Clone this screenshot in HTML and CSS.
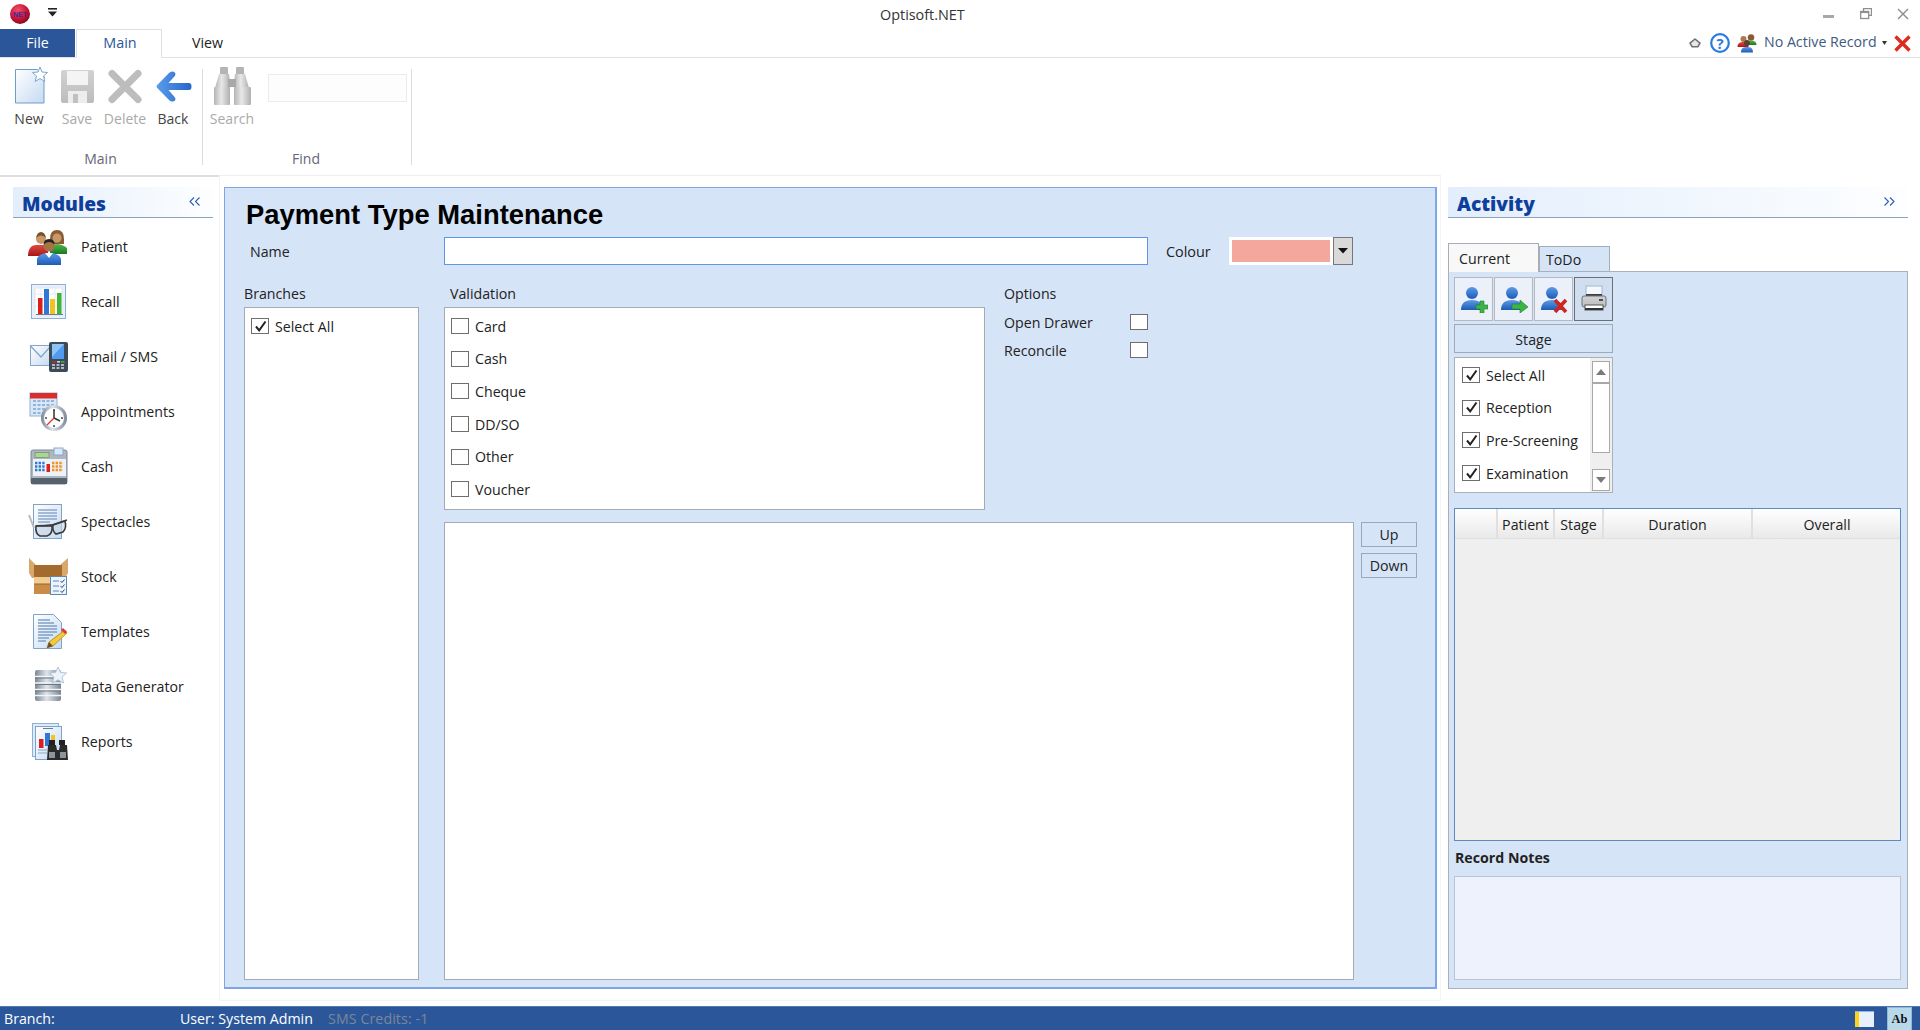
FILE: index.html
```html
<!DOCTYPE html>
<html lang="en">
<head>
<meta charset="utf-8">
<title>Optisoft.NET</title>
<link rel="stylesheet" href="styles.css">
</head>
<body>
<svg class="defs" aria-hidden="true">
  <defs>
    <linearGradient id="gDoc" x1="0" y1="0" x2="1" y2="1"><stop offset="0" stop-color="#ffffff"/><stop offset="1" stop-color="#c4daf2"/></linearGradient>
    <linearGradient id="gBlue" x1="0" y1="0" x2="0" y2="1"><stop offset="0" stop-color="#5c9be8"/><stop offset="1" stop-color="#1c5bb5"/></linearGradient>
    <linearGradient id="gRed" x1="0" y1="0" x2="0" y2="1"><stop offset="0" stop-color="#e0493f"/><stop offset="1" stop-color="#a81818"/></linearGradient>
    <linearGradient id="gGreen" x1="0" y1="0" x2="0" y2="1"><stop offset="0" stop-color="#55b84a"/><stop offset="1" stop-color="#187a22"/></linearGradient>
    <linearGradient id="gSteel" x1="0" y1="0" x2="1" y2="0"><stop offset="0" stop-color="#7b8794"/><stop offset=".45" stop-color="#dfe4ea"/><stop offset="1" stop-color="#7b8794"/></linearGradient>
    <linearGradient id="gSilver" x1="0" y1="0" x2="1" y2="0"><stop offset="0" stop-color="#b4b4b4"/><stop offset=".45" stop-color="#e8e8e8"/><stop offset="1" stop-color="#b0b0b0"/></linearGradient>
    <linearGradient id="gGray" x1="0" y1="0" x2="0" y2="1"><stop offset="0" stop-color="#d2d2d2"/><stop offset="1" stop-color="#bcbcbc"/></linearGradient>
    <linearGradient id="gBack" x1="0" y1="0" x2="1" y2="0"><stop offset="0" stop-color="#5b9bec"/><stop offset="1" stop-color="#2467c8"/></linearGradient>
    <radialGradient id="gBall" cx=".4" cy=".3" r=".8"><stop offset="0" stop-color="#f0506a"/><stop offset=".6" stop-color="#c81030"/><stop offset="1" stop-color="#5a0c28"/></radialGradient>
  </defs>
</svg>

<div class="app">
  <header class="titlebar">
    <div class="qat">
      <svg class="logo" width="20" height="20" viewBox="0 0 20 20"><circle cx="10" cy="10" r="10" fill="url(#gBall)"/><text x="10" y="13" class="logo-text" text-anchor="middle">NET</text></svg>
      <svg class="qat-drop" width="9" height="9" viewBox="0 0 9 9"><rect x="0" y="0" width="9" height="1.6" fill="#222"/><path d="M0 3.4h9L4.5 8.4z" fill="#222"/></svg>
    </div>
    <div class="app-title">Optisoft.NET</div>
    <div class="win">
      <svg width="12" height="12" viewBox="0 0 12 12"><rect x="0" y="7" width="11" height="3" fill="#a8a8a8"/></svg>
      <svg width="12" height="12" viewBox="0 0 12 12" fill="none" stroke="#8f8f8f" stroke-width="1.3"><path d="M3.5 3V.7h8v6.6H9"/><rect x=".7" y="3.5" width="8" height="7" fill="#fff"/><path d="M.7 4.4h8"/></svg>
      <svg width="12" height="12" viewBox="0 0 12 12" fill="none" stroke="#8a8a8a" stroke-width="1.4"><path d="M1 1l10 10M11 1L1 11"/></svg>
    </div>
  </header>

  <nav class="tabsbar">
    <div class="tab-file">File</div>
    <div class="tab-main">Main</div>
    <div class="tab-view">View</div>
    <div class="tools">
      <svg class="tool-chev" width="12" height="10" viewBox="0 0 12 10" fill="#e8e8e8" stroke="#707070" stroke-width="1.6" stroke-linejoin="round"><path d="M1 5.200L6 1l5 4.200-2.200 3.600H3.200z"/></svg>
      <svg class="tool-help" width="20" height="20" viewBox="0 0 20 20"><circle cx="10" cy="10" r="8.8" fill="#fff" stroke="#2a7be0" stroke-width="2.200"/><text x="10" y="15.500" class="help-text" text-anchor="middle">?</text></svg>
      <svg class="tool-people" width="20" height="20" viewBox="0 0 40 40">
        <circle cx="13" cy="12" r="6" fill="#a87a50"/><path d="M1 28c0-8 5-10 12-10s10 3 10 10z" fill="url(#gRed)"/>
        <circle cx="28" cy="9" r="6.5" fill="#8b5a30"/><path d="M20 24c0-7 3-9 8-9s11 2 11 9z" fill="url(#gGreen)"/>
        <circle cx="20" cy="20" r="6" fill="#5c4030"/><path d="M8 39c0-9 5-11 12-11s12 2 12 11z" fill="url(#gBlue)"/>
      </svg>
      <span class="tool-record">No Active Record</span>
      <svg class="tool-caret" width="5" height="4" viewBox="0 0 5 4"><path d="M0 0h5L2.500 4z" fill="#333"/></svg>
      <svg class="tool-close" width="17" height="17" viewBox="0 0 17 17" fill="none" stroke="#de2b20" stroke-width="3.400"><path d="M1.500 1.500l14 14M15.500 1.500l-14 14"/></svg>
    </div>
  </nav>

  <section class="ribbon">
    <div class="rgroup rgroup-main">
      <div class="rbtns">
        <div class="rbtn">
          <svg width="40" height="40" viewBox="0 0 40 40"><path d="M6.500 3.500h22l6.500 7v26.500h-28.500z" fill="url(#gDoc)" stroke="#6e9cc8"/><path d="M31 1l2 5 5.500.5-4 3.500 1.300 5.500L31 12.500 26.200 15.500l1.300-5.500-4-3.500 5.500-.5z" fill="#fff" stroke="#7ea5cf" stroke-width="1"/></svg>
          <span>New</span>
        </div>
        <div class="rbtn off">
          <svg width="40" height="40" viewBox="0 0 40 40"><path d="M4 6q0-2 2-2h29q2 0 2 2v29q0 2-2 2H6q-2 0-2-2z" fill="url(#gGray)"/><rect x="10" y="5" width="21" height="14" fill="#f4f4f4"/><rect x="11" y="25" width="19" height="12" fill="#ededed"/><rect x="16" y="28" width="5" height="9" fill="#c0c0c0"/></svg>
          <span>Save</span>
        </div>
        <div class="rbtn off">
          <svg width="40" height="40" viewBox="0 0 40 40" fill="none" stroke="#bdbdbd" stroke-width="7" stroke-linecap="round"><path d="M7 7.500l26 26M33 7.500l-26 26"/></svg>
          <span>Delete</span>
        </div>
        <div class="rbtn">
          <svg width="40" height="40" viewBox="0 0 40 40"><path d="M19 5.500q2 0 3 1.200t0 3L15.500 17H36q2.500 0 2.500 3.500T36 24H15.500l6.500 7.500q1 1.800 0 3T19 35.500q-1.500 0-3-1.500L4 21.800q-1-1.300 0-2.600L16 7q1.500-1.500 3-1.500z" fill="url(#gBack)"/></svg>
          <span>Back</span>
        </div>
      </div>
      <div class="rlabel">Main</div>
    </div>
    <div class="rgroup rgroup-find">
      <div class="rbtns">
        <div class="rbtn off">
          <svg width="40" height="40" viewBox="0 0 40 40"><rect x="8" y="1" width="8" height="8" rx="1" fill="#b4b4b4"/><rect x="24" y="1" width="8" height="8" rx="1" fill="#b4b4b4"/><path d="M7 8h10l1 8v6H3z" fill="url(#gSilver)"/><path d="M23 8h10l4 14H22v-6z" fill="url(#gSilver)"/><rect x="16" y="13" width="8" height="8" fill="#a8a8a8"/><rect x="2" y="21" width="16" height="18" rx="1" fill="url(#gSilver)"/><rect x="22" y="21" width="17" height="18" rx="1" fill="url(#gSilver)"/></svg>
          <span>Search</span>
        </div>
        <div class="find-input"></div>
      </div>
      <div class="rlabel">Find</div>
    </div>
  </section>

  <main class="body">
    <aside class="sidebar">
      <div class="panelhead"><span class="panelhead-title">Modules</span><svg class="panelhead-chev" width="11" height="9" viewBox="0 0 11 9" fill="none" stroke="#2a5db0" stroke-width="1.100"><path d="M5 .5l-4 4 4 4M10.500.5l-4 4 4 4"/></svg></div>
      <ul class="modules">
        <li class="mod">
          <svg width="40" height="40" viewBox="0 0 40 40">
            <circle cx="13" cy="12" r="5" fill="#c8976a"/><path d="M8 11q1-6 5-6t5 6q-2-2.500-5-2.500T8 11z" fill="#7a5228"/><path d="M0 29c0-8 4-11 8-11h12v11z" fill="url(#gRed)"/>
            <path d="M22 12q0-9 7-9t7 9v5h-14z" fill="#8a5c34"/><circle cx="29" cy="11" r="4.500" fill="#c8976a"/><path d="M22 27v-7q2-3 7-3t10 4v6z" fill="url(#gGreen)"/>
            <circle cx="21" cy="19" r="5.500" fill="#a87248"/><path d="M15.500 18q0-6 5.500-6t5.500 6q-2-3-5.500-3t-5.500 3z" fill="#222"/><path d="M9 38v-6q2-6 12-6t12 6v6z" fill="url(#gBlue)"/><path d="M17 26l4 5 4-5z" fill="#fff"/>
          </svg>
          <span>Patient</span>
        </li>
        <li class="mod">
          <svg width="40" height="40" viewBox="0 0 40 40"><rect x="3.500" y="2.500" width="34" height="34" fill="#e9f0fa" stroke="#8fb0d6"/><rect x="7" y="6" width="27" height="27" fill="#fff" stroke="#dde6f0"/><path d="M7 12h27M7 18h27M7 24h27M13 6v27M20 6v27M27 6v27" stroke="#e6ebf2" stroke-width="1"/><rect x="10" y="16" width="4.500" height="16" fill="#d8211e"/><rect x="16" y="7" width="5" height="25" fill="#2f78d6"/><rect x="22" y="17" width="5" height="15" fill="#f2c21f"/><rect x="29" y="11" width="4.500" height="21" fill="#3fb43a"/><path d="M8 32.500h27" stroke="#6b7c90"/></svg>
          <span>Recall</span>
        </li>
        <li class="mod">
          <svg width="40" height="40" viewBox="0 0 40 40"><rect x="2.500" y="8.500" width="20" height="20" fill="url(#gDoc)" stroke="#84a6cc"/><path d="M2.500 9L13 20 23 9" fill="none" stroke="#84a6cc" stroke-width="1.300"/><rect x="21" y="5" width="19" height="30" rx="2" fill="#3d4a58"/><rect x="24" y="7" width="12" height="15" fill="#4f9bf0"/><path d="M24 7h12L24 20z" fill="#8cc4f7"/><rect x="24" y="24" width="4" height="1.600" fill="#d02020"/><rect x="29" y="24" width="3" height="1.600" fill="#cfd6de"/><rect x="33" y="24" width="3.500" height="1.600" fill="#40b040"/><path d="M24 28h3m1.500 0h3m1.500 0h3M24 31h3m1.500 0h3m1.500 0h3" stroke="#d5dbe2" stroke-width="1.500"/></svg>
          <span>Email / SMS</span>
        </li>
        <li class="mod">
          <svg width="40" height="40" viewBox="0 0 40 40"><rect x="2" y="1" width="27" height="23" fill="#dbe7f6" stroke="#93b1d4"/><rect x="2" y="1" width="27" height="5.500" fill="#d82f2a"/><path d="M5 9h21M5 13h21M5 17h14M5 21h12" stroke="#8fb4e0" stroke-width="2" stroke-dasharray="3 1.500"/><circle cx="26" cy="26" r="13" fill="url(#gSteel)"/><circle cx="26" cy="26" r="10" fill="#fff"/><path d="M26 26V18M26 26l6 3" stroke="#333" stroke-width="1.500" fill="none"/><path d="M26 26l-7 7" stroke="#e03020" stroke-width="1.300"/><path d="M26 17v2M26 33v2M17 26h2M33 26h2" stroke="#444" stroke-width="1.500"/></svg>
          <span>Appointments</span>
        </li>
        <li class="mod">
          <svg width="40" height="40" viewBox="0 0 40 40"><rect x="3" y="3" width="36" height="34" rx="2" fill="#aeb6c0" stroke="#7e8a98"/><rect x="26" y="1" width="9" height="7" fill="#d8e8f8" stroke="#8ba8c8"/><rect x="7" y="5.500" width="14" height="5" fill="#a8d890" stroke="#6e7c6a" stroke-width=".6"/><rect x="5" y="12" width="33" height="17" fill="#eef1f5"/><path d="M7 16h10M7 19.500h10M7 23h10" stroke="#2f78d6" stroke-width="2.400" stroke-dasharray="2.400 1.200"/><path d="M24 16h11M24 19.500h11M24 23h11" stroke="#ef9226" stroke-width="2.400" stroke-dasharray="2.400 1.200"/><rect x="18.500" y="17" width="3.500" height="8" fill="#d82020"/><rect x="3" y="31" width="36" height="6" fill="#56616e"/></svg>
          <span>Cash</span>
        </li>
        <li class="mod">
          <svg width="40" height="40" viewBox="0 0 40 40"><rect x="5.500" y="2.500" width="28" height="34" fill="url(#gDoc)" stroke="#7fa3c9"/><path d="M10 8h19M10 11h19M10 14h19M10 17h19M10 20h12" stroke="#8aa8cc" stroke-width="1.500"/><path d="M1 13l5 13" stroke="#bbb" stroke-width="2"/><path d="M8 24q9 0 16-1l15-5" stroke="#444" stroke-width="1.800" fill="none"/><path d="M8 24h16q1 8-5 10h-7q-5-2-4-10z" fill="#c4d4e6" fill-opacity=".6" stroke="#3a3a3a" stroke-width="1.600"/><path d="M25 23l12-4q2 7-2 11l-7 2q-4-3-3-9z" fill="#c4d4e6" fill-opacity=".6" stroke="#3a3a3a" stroke-width="1.600"/></svg>
          <span>Spectacles</span>
        </li>
        <li class="mod">
          <svg width="40" height="40" viewBox="0 0 40 40"><path d="M1 1l7 7h24l8-7v15l-3 5H4l-3-5z" fill="#d9a76a"/><rect x="6" y="8" width="28" height="12" fill="#a46a2e"/><rect x="6" y="20" width="28" height="7" fill="#f0cd95"/><rect x="6" y="27" width="28" height="10" fill="#c98b45"/><path d="M6 27h28" stroke="#9c6228"/><rect x="22.500" y="19.500" width="16" height="18" fill="#edf3fb" stroke="#5c88b6"/><path d="M25 24h6M25 29h6M25 34h6" stroke="#5c88b6"/><path d="M32.500 24l1.500 1.500 2.500-3M32.500 29l1.500 1.500 2.500-3M32.500 34l1.500 1.500 2.500-3" stroke="#2c4a70" fill="none"/></svg>
          <span>Stock</span>
        </li>
        <li class="mod">
          <svg width="40" height="40" viewBox="0 0 40 40"><path d="M5.500 2.500h20l8 8v26h-28z" fill="url(#gDoc)" stroke="#7fa3c9"/><path d="M10 8h12M10 11h16M10 14h19M10 17h19M10 20h19M10 23h15M10 26h11M10 29h8" stroke="#7f9fc6" stroke-width="1.500"/><path d="M37 18l2 3-14 13-6 2 2-6z" fill="#f5c93a" stroke="#b08020" stroke-width=".8"/><path d="M35 16l4 4-2 2-4-4z" fill="#de3a3a"/><path d="M19 36l2-6 4 4z" fill="#6a5030"/></svg>
          <span>Templates</span>
        </li>
        <li class="mod">
          <svg width="40" height="40" viewBox="0 0 40 40"><rect x="7" y="3" width="26" height="31" rx="2" fill="url(#gSteel)"/><path d="M7 9.500h26M7 16h26M7 22.500h26M7 28.500h26" stroke="#f2f4f7" stroke-width="1.300"/><path d="M7 11h26M7 17.500h26M7 24h26" stroke="#6b7683"/><path d="M30 0l2.500 5.500 6 .5-4.500 4 1.500 6-5.500-3.200-5.500 3.200 1.500-6-4.500-4 6-.5z" fill="#eef3fa" stroke="#aec4dc"/></svg>
          <span>Data Generator</span>
        </li>
        <li class="mod">
          <svg width="40" height="40" viewBox="0 0 40 40"><rect x="4.500" y="1.500" width="26" height="33" fill="#dfeafa" stroke="#8fb0d6"/><rect x="7.500" y="4.500" width="26" height="33" fill="url(#gDoc)" stroke="#7fa3c9"/><path d="M15 6.500h10" stroke="#6080a8"/><rect x="11" y="17" width="4.500" height="9" fill="#d8211e"/><rect x="17" y="11" width="5" height="13" fill="#2f78d6"/><rect x="23" y="13" width="4" height="9" fill="#f2c21f"/><path d="M10 28h9M10 31h9" stroke="#8aa8cc"/><rect x="21" y="18" width="6" height="5" fill="#222"/><rect x="31" y="18" width="6" height="5" fill="#222"/><path d="M20 23h8l1 5h2l1-5h7l1 15H19z" fill="#2b2b2b"/><path d="M21 30h6v6h-6zM32 30h6v6h-6z" fill="#8c949c"/></svg>
          <span>Reports</span>
        </li>
      </ul>
    </aside>

    <div class="center">
      <section class="maint">
        <h1 class="maint-title">Payment Type Maintenance</h1>
        <div class="name-row">
          <label class="name-label">Name</label>
          <div class="name-input"></div>
          <label class="colour-label">Colour</label>
          <div class="swatch"></div>
          <div class="swatch-btn"><svg width="12" height="8" viewBox="0 0 12 8"><path d="M1 1h10L6 6.500z" fill="#111"/></svg></div>
        </div>
        <div class="lower">
          <div class="col-branches">
            <div class="caption">Branches</div>
            <div class="box box-branches">
              <div class="chk"><span class="cb"><svg width="15" height="15" viewBox="0 0 15 15"><path d="M3 7.500l3.200 3.800L12.500 2.500" fill="none" stroke="#222" stroke-width="2"/></svg></span>Select All</div>
            </div>
          </div>
          <div class="col-rest">
            <div class="top">
              <div class="col-valid">
                <div class="caption caption-ind">Validation</div>
                <div class="box box-valid">
                  <div class="chk"><span class="cb"></span>Card</div>
                  <div class="chk"><span class="cb"></span>Cash</div>
                  <div class="chk"><span class="cb"></span>Cheque</div>
                  <div class="chk"><span class="cb"></span>DD/SO</div>
                  <div class="chk"><span class="cb"></span>Other</div>
                  <div class="chk"><span class="cb"></span>Voucher</div>
                </div>
              </div>
              <div class="col-opts">
                <div class="caption">Options</div>
                <div class="opt"><span>Open Drawer</span><span class="cb"></span></div>
                <div class="opt"><span>Reconcile</span><span class="cb"></span></div>
              </div>
            </div>
            <div class="bottom">
              <div class="box box-large"></div>
              <div class="updown">
                <div class="ud">Up</div>
                <div class="ud">Down</div>
              </div>
            </div>
          </div>
        </div>
      </section>
    </div>

    <aside class="activity">
      <div class="panelhead"><span class="panelhead-title">Activity</span><svg class="panelhead-chev" width="11" height="9" viewBox="0 0 11 9" fill="none" stroke="#2a5db0" stroke-width="1.100"><path d="M.5.500l4 4-4 4M6 .5l4 4-4 4"/></svg></div>
      <div class="act-tabs">
        <div class="act-tab act-on">Current</div>
        <div class="act-tab act-off">ToDo</div>
      </div>
      <div class="act-panel">
        <div class="act-icons">
          <div class="ibtn"><svg width="28" height="28" viewBox="0 0 28 28"><circle cx="12" cy="8" r="6" fill="url(#gBlue)"/><path d="M1 25q0-10 11-10t11 10z" fill="url(#gBlue)"/><path d="M16 20h4v-4h4v4h4v4h-4v4h-4v-4h-4z" fill="#3cb44a" stroke="#1f7f2a" stroke-width=".6"/></svg></div>
          <div class="ibtn"><svg width="28" height="28" viewBox="0 0 28 28"><circle cx="12" cy="8" r="6" fill="url(#gBlue)"/><path d="M1 25q0-10 11-10t11 10z" fill="url(#gBlue)"/><path d="M12 19h8v-4l8 7-8 6v-4h-8z" fill="#3cb44a" stroke="#1f7f2a" stroke-width=".6"/></svg></div>
          <div class="ibtn"><svg width="28" height="28" viewBox="0 0 28 28"><circle cx="12" cy="8" r="6" fill="url(#gBlue)"/><path d="M1 25q0-10 11-10t11 10z" fill="url(#gBlue)"/><path d="M15 15l11 12M26 15L15 27" stroke="#cf2420" stroke-width="3.600" fill="none"/></svg></div>
          <div class="ibtn ibtn-on"><svg width="28" height="28" viewBox="0 0 28 28"><rect x="6" y="1" width="16" height="10" fill="#f4f8fd" stroke="#9fb6d0"/><rect x="6" y="9" width="16" height="2" fill="#3a3f46"/><rect x="2" y="11" width="24" height="11" rx="2" fill="url(#gGray)" stroke="#6d747c"/><rect x="19" y="14" width="4" height="2" fill="#4a5058"/><rect x="5" y="20" width="18" height="5" fill="#fff" stroke="#555"/><rect x="5" y="23" width="18" height="2" fill="#2f343a"/></svg></div>
        </div>
        <div class="stage-btn">Stage</div>
        <div class="stage-list">
          <div class="stage-items">
            <div class="chk"><span class="cb"><svg width="15" height="15" viewBox="0 0 15 15"><path d="M3 7.500l3.200 3.800L12.500 2.500" fill="none" stroke="#222" stroke-width="2"/></svg></span>Select All</div>
            <div class="chk"><span class="cb"><svg width="15" height="15" viewBox="0 0 15 15"><path d="M3 7.500l3.200 3.800L12.500 2.500" fill="none" stroke="#222" stroke-width="2"/></svg></span>Reception</div>
            <div class="chk"><span class="cb"><svg width="15" height="15" viewBox="0 0 15 15"><path d="M3 7.500l3.200 3.800L12.500 2.500" fill="none" stroke="#222" stroke-width="2"/></svg></span>Pre-Screening</div>
            <div class="chk"><span class="cb"><svg width="15" height="15" viewBox="0 0 15 15"><path d="M3 7.500l3.200 3.800L12.500 2.500" fill="none" stroke="#222" stroke-width="2"/></svg></span>Examination</div>
          </div>
          <div class="scroll">
            <div class="sbtn"><svg width="10" height="6" viewBox="0 0 10 6"><path d="M0 6l5-6 5 6z" fill="#7a7a7a"/></svg></div>
            <div class="sthumb"></div>
            <div class="sbtn"><svg width="10" height="6" viewBox="0 0 10 6"><path d="M0 0l5 6 5-6z" fill="#7a7a7a"/></svg></div>
          </div>
        </div>
        <div class="grid">
          <div class="grid-head">
            <div class="gh gh-0"></div>
            <div class="gh gh-1">Patient</div>
            <div class="gh gh-2">Stage</div>
            <div class="gh gh-3">Duration</div>
            <div class="gh gh-4">Overall</div>
          </div>
        </div>
        <div class="notes-title">Record Notes</div>
        <div class="notes"></div>
      </div>
    </aside>
  </main>

  <footer class="status">
    <span class="st-branch">Branch:</span>
    <span class="st-user">User: System Admin</span>
    <span class="st-sms">SMS Credits: -1</span>
    <div class="st-right">
      <div class="st-view"></div>
      <div class="st-ab">Ab</div>
    </div>
  </footer>
</div>
</body>
</html>
```

FILE: styles.css
```css
* { box-sizing: border-box; }
html, body { margin: 0; padding: 0; background: #fff; }
body { font-family: "Open Sans", "Noto Sans", sans-serif; font-size: 14.2px; color: #222; letter-spacing: 0; }
svg { display: block; flex: none; }
.defs { position: absolute; width: 0; height: 0; }
.app { width: 1920px; height: 1030px; display: flex; flex-direction: column; overflow: hidden; }

.titlebar { height: 29px; display: flex; align-items: flex-start; flex: none; }
.qat { width: 880px; display: flex; padding: 4px 0 0 10px; }
.qat-drop { margin: 4px 0 0 18px; }
.logo-text { font: bold 7px "Liberation Sans", sans-serif; fill: #3b2a9a; }
.app-title { padding-top: 5px; font-size: 14.4px; line-height: 20px; color: #333; }
.win { margin-left: auto; display: flex; gap: 25px; padding: 8px 11px 0 0; }

.tabsbar { height: 29px; display: flex; align-items: stretch; border-bottom: 1px solid #e1e1e1; flex: none; }
.tab-file { width: 75px; height: 28px; background: #2b579a; color: #fff; text-align: center; line-height: 28px; font-size: 14.2px; }
.tab-main { width: 86px; height: 29px; margin-left: 1px; padding-left: 2px; border: 1px solid #dedede; border-bottom-color: #fff; color: #2b579a; text-align: center; line-height: 26px; font-size: 14.4px; }
.tab-view { width: 90px; padding-left: 1px; text-align: center; line-height: 27px; font-size: 14.2px; color: #222; }
.tools { margin-left: auto; display: flex; align-items: center; padding-right: 9px; height: 28px; }
.tool-chev { margin-right: 9px; }
.tool-help { margin-right: 7px; }
.tool-people { margin-right: 7px; }
.tool-record { font-size: 14.2px; line-height: 26px; height: 28px; color: #3d5a80; width: 118px; white-space: nowrap; }
.tool-caret { margin-right: 7px; }
.help-text { font: bold 15px "Open Sans", sans-serif; fill: #2a7be0; }

.ribbon { height: 117px; display: flex; flex: none; }
.rgroup { position: relative; height: 107px; padding: 8px 4px 0 5px; display: flex; flex-direction: column; }
.rgroup::after { content: ""; position: absolute; right: 0; top: 11px; bottom: 0; width: 1px; background: #dcdcdc; }
.rgroup-main { width: 203px; }
.rgroup-find { width: 209px; }
.rbtns { display: flex; height: 65px; }
.rbtn { width: 48px; display: flex; flex-direction: column; align-items: center; color: #444; font-size: 14px; }
.rbtn span { line-height: 20px; margin-top: 3px; white-space: nowrap; }
.rbtn.off { color: #a9a9a9; }
.find-input { width: 139px; height: 28px; margin: 8px 0 0 12px; border: 1px solid #e9ebef; background: #fdfdfd; }
.rlabel { text-align: center; color: #667; font-size: 14px; line-height: 20px; margin-top: 20px; padding-right: 3px; }
.rgroup-find .rlabel { padding-right: 4px; }

.body { flex: 1; display: flex; min-height: 0; }
.sidebar { width: 219px; border-top: 2px solid #dedede; padding: 10px 6px 0 13px; flex: none; }
.panelhead { height: 31px; display: flex; justify-content: space-between; align-items: flex-start; background: linear-gradient(90deg, #e3eefc, #fdfeff); border-bottom: 1px solid #8aa3c0; padding: 0 13px 0 9px; flex: none; }
.panelhead-title { font-size: 19.2px; font-weight: 800; color: #0f3f9c; line-height: 34px; }
.panelhead-chev { margin-top: 10px; }
.modules { list-style: none; margin: 0; padding: 1px 0 0 15px; }
.mod { height: 55px; display: flex; align-items: center; gap: 13px; }

.center { width: 1222px; flex: none; margin-bottom: 5px; padding: 11px 4px; border: 1px solid #f4f4f4; border-top-color: #eeeeee; }
.maint { width: 1213px; height: 802px; background: #d6e4f7; border: 1px solid #7ea6e6; border-width: 1px 2px 2px 1px; padding: 4px 17px 7px 19px; display: flex; flex-direction: column; }
.maint-title { margin: 0; font: bold 27.4px/46px "Liberation Sans", Arial, sans-serif; color: #000; height: 45px; padding-left: 2px; }
.name-row { display: flex; height: 28px; flex: none; }
.name-label { width: 200px; padding: 5px 0 0 6px; line-height: 20px; }
.name-input { width: 704px; height: 28px; background: #fff; border: 1px solid #5e97e6; }
.colour-label { width: 63px; margin-left: 18px; padding-top: 5px; font-size: 14.4px; line-height: 20px; }
.swatch { width: 104px; height: 28px; background: #f4a79c; border: 3px solid #fff; }
.swatch-btn { width: 20px; height: 28px; background: #d9d9d9; border: 1px solid #777; display: flex; align-items: center; justify-content: center; }

.lower { flex: 1; display: flex; min-height: 0; }
.col-branches { width: 175px; margin-right: 25px; display: flex; flex-direction: column; flex: none; }
.caption { padding-top: 18px; line-height: 21px; height: 42px; }
.caption-ind { padding-left: 6px; }
.box { background: #fff; border: 1px solid #a5aab3; }
.box-branches { flex: 1; padding: 2px 0 0 6px; }
.col-rest { flex: 1; display: flex; flex-direction: column; min-width: 0; }
.top { display: flex; height: 245px; flex: none; }
.col-valid { width: 541px; flex: none; }
.box-valid { height: 203px; padding: 2px 0 0 6px; }
.chk { height: 32.6px; display: flex; align-items: center; gap: 6px; white-space: nowrap; }
.box .chk { line-height: 19px; }
.cb { width: 18px; height: 16px; border: 1px solid #6e6e6e; background: #fff; flex: none; display: flex; align-items: center; justify-content: center; }
.col-opts { width: 144px; margin-left: 19px; flex: none; }
.caption + .opt { margin-top: 1px; }
.opt { height: 28px; display: flex; justify-content: space-between; align-items: center; }
.bottom { flex: 1; display: flex; margin-top: 12px; min-height: 0; }
.box-large { width: 910px; flex: none; }
.updown { margin-left: 7px; display: flex; flex-direction: column; gap: 6px; }
.ud { width: 56px; height: 25px; border: 1px solid #9aa8bc; text-align: center; line-height: 23px; font-size: 14.2px; }

.activity { width: 460px; margin-left: 7px; padding-top: 12px; display: flex; flex-direction: column; flex: none; height: 814px; }
.act-tabs { display: flex; align-items: flex-end; height: 29px; margin-top: 25px; flex: none; }
.act-tab { border: 1px solid #a6adb8; border-bottom: 0; }
.act-on { width: 91px; height: 29px; background: #f8f8f8; padding-left: 10px; line-height: 29px; position: relative; z-index: 1; }
.act-off { width: 71px; height: 26px; background: #d6e4f7; padding-left: 6px; line-height: 26px; }
.act-panel { flex: 1; margin-top: -1px; background: #d6e4f7; border: 1px solid #aab0b8; padding: 5px 6px 8px 5px; display: flex; flex-direction: column; min-height: 0; }
.act-icons { display: flex; width: 159px; height: 44px; justify-content: space-between; flex: none; }
.ibtn { width: 39px; height: 44px; background: #ecf1f9; border: 1px solid #b5b9bf; display: flex; align-items: center; justify-content: center; }
.ibtn-on { background: #d0deef; border-color: #6a7078; }
.stage-btn { width: 159px; height: 29px; margin-top: 3px; border: 1px solid #9fa9b8; text-align: center; line-height: 29px; flex: none; }
.stage-list { width: 159px; height: 136px; margin-top: 4px; background: #fff; border: 1px solid #aab0b8; display: flex; justify-content: space-between; flex: none; }
.stage-items { padding: 1px 0 0 7px; }
.scroll { width: 22px; background: #efefef; padding: 3px 2px 1px; display: flex; flex-direction: column; }
.sbtn { height: 22px; background: #fff; border: 1px solid #a8a8a8; display: flex; align-items: center; justify-content: center; flex: none; }
.sthumb { height: 70px; background: #fff; border: 1px solid #a8a8a8; margin-bottom: 16px; flex: none; }
.grid { width: 447px; height: 333px; margin-top: 15px; background: #efefef; border: 1px solid #5e8bbf; flex: none; }
.grid-head { height: 30px; display: flex; background: linear-gradient(#ffffff, #e9e9e9); border-bottom: 1px solid #e0e0e0; }
.gh { border-right: 2px solid #e0e0e0; text-align: center; line-height: 32px; flex: none; }
.gh-0 { width: 43px; }
.gh-1 { width: 57px; }
.gh-2 { width: 49px; }
.gh-3 { width: 149px; }
.gh-4 { width: 148px; border-right: 0; }
.notes-title { font-weight: 700; line-height: 20px; margin-top: 7px; padding-left: 1px; flex: none; }
.notes { width: 447px; flex: 1; margin-top: 8px; background: #edf2fc; border: 1px solid #bcc3d0; }

.status { height: 24px; flex: none; background: #2b579a; border-top: 1px solid #5279b0; color: #fff; display: flex; align-items: center; line-height: 22px; font-size: 14.2px; }
.st-branch { width: 180px; padding-left: 4px; }
.st-user { width: 148px; }
.st-sms { color: #7c8696; letter-spacing: .1px; }
.st-right { margin-left: auto; display: flex; align-items: center; padding-right: 8px; height: 23px; }
.st-view { width: 19px; height: 16px; margin-right: 13px; background: linear-gradient(90deg, #ffd21a 0 4px, #e8f1fb 4px); border-top: 1px solid #8fb4e6; }
.st-ab { width: 25px; height: 24px; background: #b8d9ea; border: 1px solid #8fb9d4; color: #111; font: bold 12.5px/22px "Liberation Serif", serif; text-align: center; }
```
